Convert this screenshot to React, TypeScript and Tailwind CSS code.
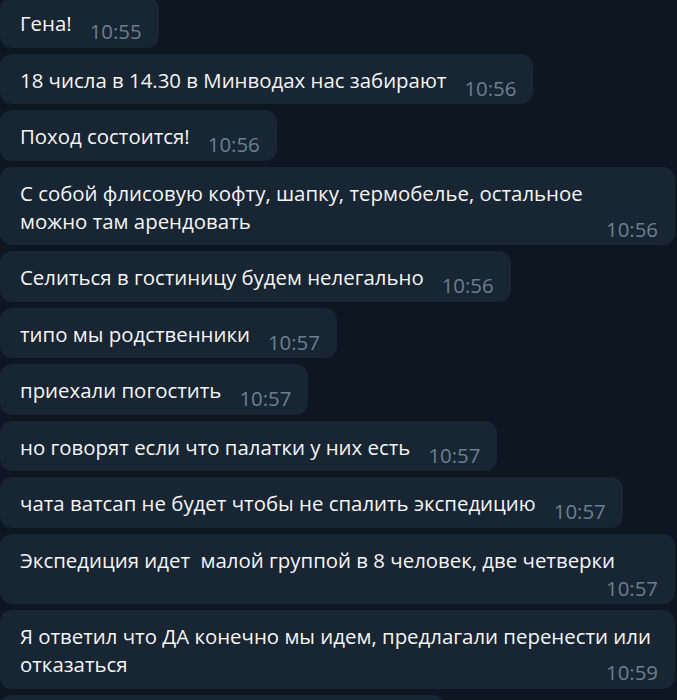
import React from "react";

interface IMessage {
  lines: string[];
  time: string;
  wide?: boolean;
  timeBelow?: boolean;
}

const messages: IMessage[] = [
  { lines: ["Гена!"], time: "10:55" },
  { lines: ["18 числа в 14.30 в Минводах нас забирают"], time: "10:56" },
  { lines: ["Поход состоится!"], time: "10:56" },
  {
    lines: [
      "С собой флисовую кофту, шапку, термобелье, остальное",
      "можно там арендовать",
    ],
    time: "10:56",
    wide: true,
  },
  { lines: ["Селиться в гостиницу будем нелегально"], time: "10:56" },
  { lines: ["типо мы родственники"], time: "10:57" },
  { lines: ["приехали погостить"], time: "10:57" },
  { lines: ["но говорят если что палатки у них есть"], time: "10:57" },
  { lines: ["чата ватсап не будет чтобы не спалить экспедицию"], time: "10:57" },
  {
    lines: ["Экспедиция идет  малой группой в 8 человек, две четверки"],
    time: "10:57",
    wide: true,
    timeBelow: true,
  },
  {
    lines: [
      "Я ответил что ДА конечно мы идем, предлагали перенести или",
      "отказаться",
    ],
    time: "10:59",
    wide: true,
  },
];

const Bubble: React.FC<{ msg: IMessage }> = ({ msg }) => {
  return (
    <div
      className={`rounded-xl bg-[#182533] pl-5 pr-[17px] pt-3 pb-[2.5px] ${
        msg.wide ? "w-[675px]" : "w-fit"
      }`}
    >
      <div className="text-[20.4px] leading-7 text-[#f5f5f5] whitespace-pre-wrap">
        {msg.lines.map((line, i) => (
          <React.Fragment key={i}>
            {line}
            {i < msg.lines.length - 1 && <br />}
          </React.Fragment>
        ))}
        {!msg.timeBelow && <span className="inline-block w-[70px]" />}
      </div>
      <div
        className={`text-right text-[20.4px] leading-7 text-[#6d7f8f] ${
          msg.timeBelow ? "" : "-mt-5"
        }`}
      >
        {msg.time}
      </div>
    </div>
  );
};

export default function App() {
  return (
    <div
      className="h-[700px] w-[677px] overflow-hidden bg-[#0e1621]"
      style={{ fontFamily: '"Open Sans", "Noto Sans", sans-serif' }}
    >
      <div className="-mt-[3px] flex flex-col gap-[6px]">
        {messages.map((msg, i) => (
          <Bubble key={i} msg={msg} />
        ))}
        {/* next message, only its top edge is on screen */}
        <div className="h-[51px] w-[445px] rounded-xl bg-[#182533]" />
      </div>
    </div>
  );
}
